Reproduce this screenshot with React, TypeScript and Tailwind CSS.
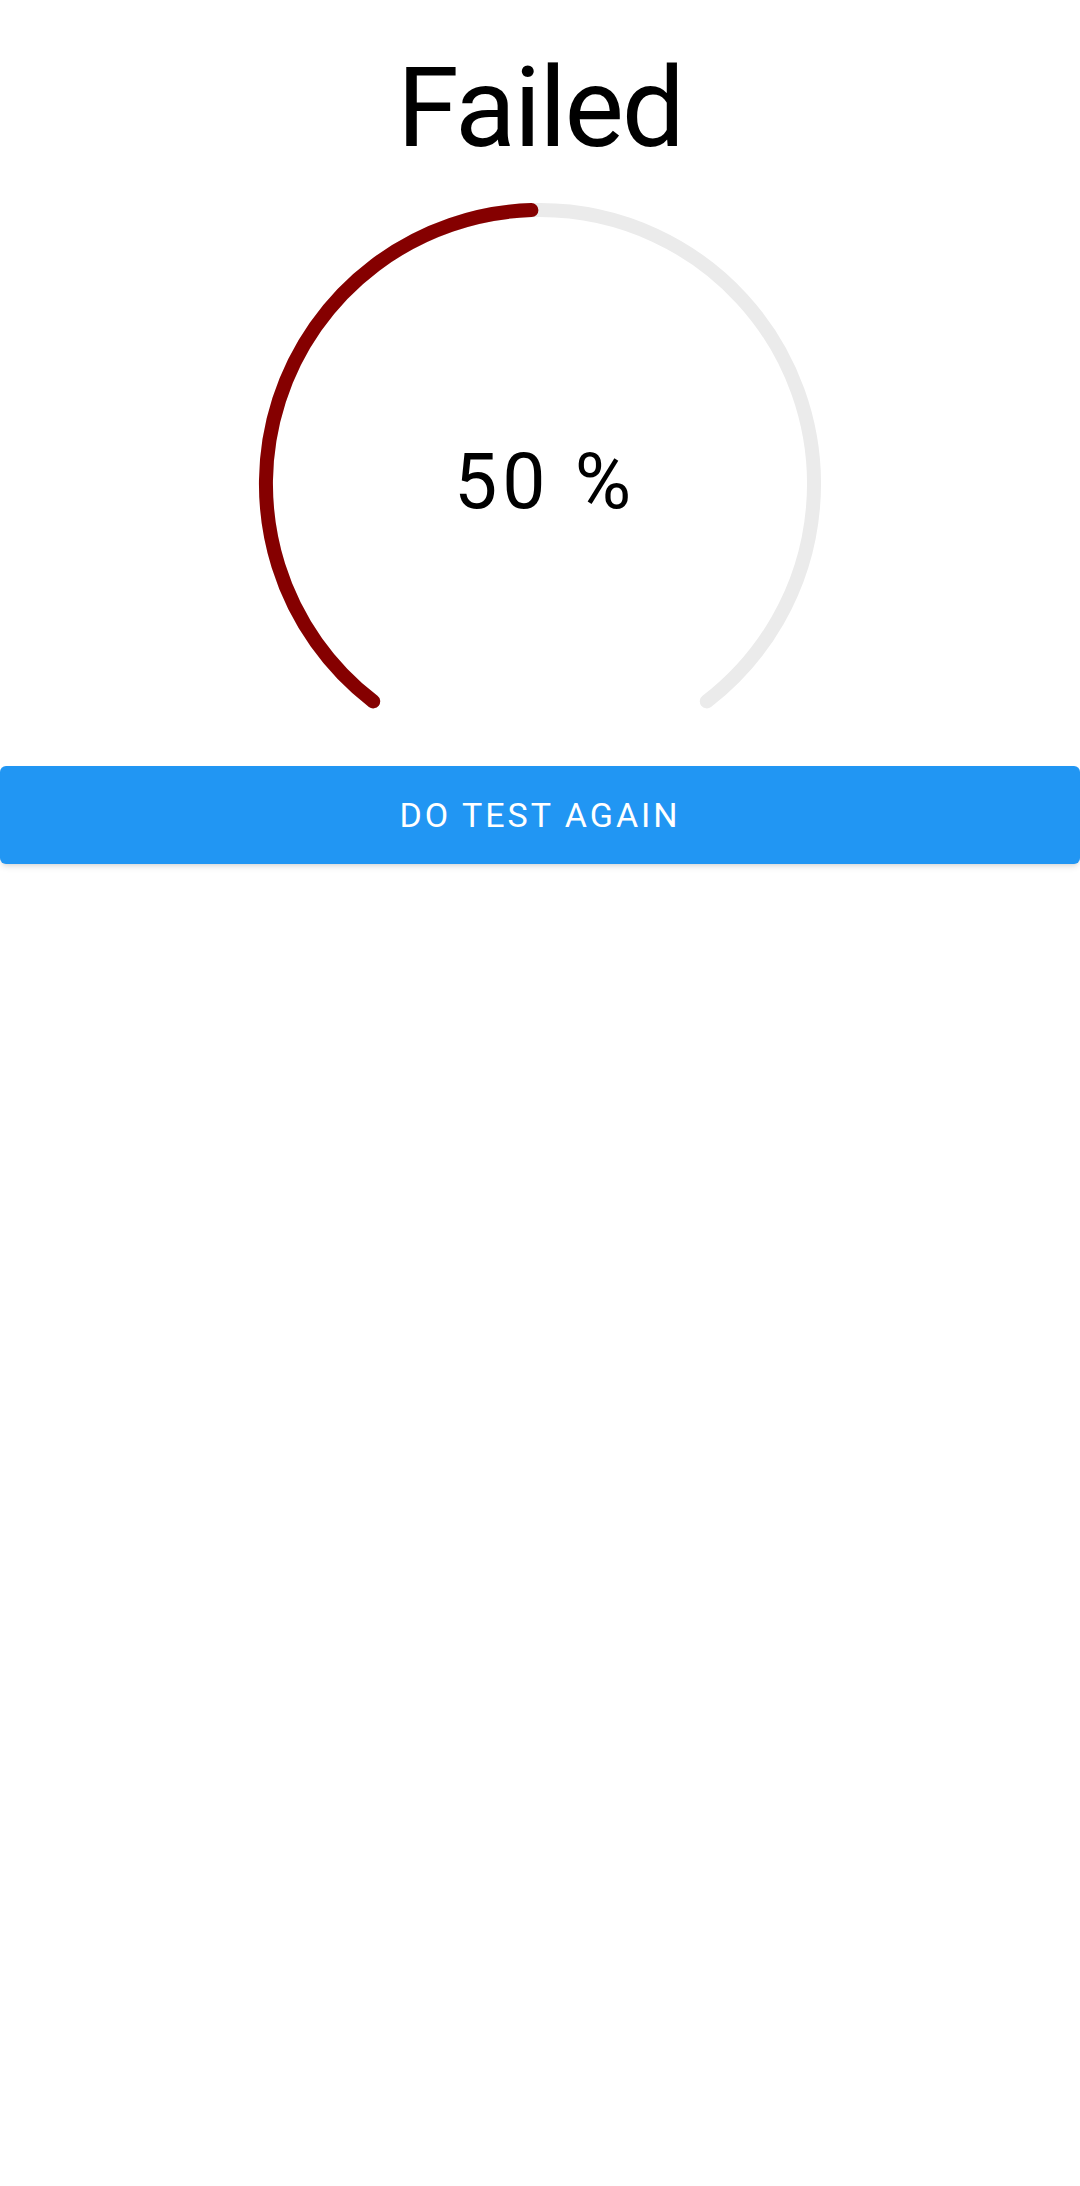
import React from "react";

const SCORE = 50;

const Gauge: React.FC<{ value: number }> = ({ value }) => {
  return (
    <div className="relative mx-auto w-[580px] h-[520px]">
      <svg width="580" height="520" viewBox="0 0 580 520" fill="none">
        <path
          d="M 123.2 501.4 A 274 274 0 1 1 456.8 501.4"
          stroke="#ebebeb"
          strokeWidth="14"
          strokeLinecap="round"
        />
        <path
          d="M 123.2 501.4 A 274 274 0 0 1 281.4 10.1"
          stroke="#850000"
          strokeWidth="14"
          strokeLinecap="round"
        />
      </svg>
      <div className="absolute left-0 right-0 top-[244px] text-center text-[77px] leading-none tracking-[5px] text-black pl-[10px]">
        {value} %
      </div>
    </div>
  );
};

export default function App() {
  return (
    <div className="min-h-screen bg-white font-['Roboto',sans-serif]">
      <h1 className="pt-[52px] text-center text-[112px] leading-none tracking-[-2px] text-black">Failed</h1>
      <div className="mt-[36px]">
        <Gauge value={SCORE} />
      </div>
      <button className="mt-[46px] w-full h-[98px] rounded-[6px] bg-[#2196f3] text-white text-[34px] uppercase tracking-[3px] shadow-md">
        Do test again
      </button>
    </div>
  );
}
